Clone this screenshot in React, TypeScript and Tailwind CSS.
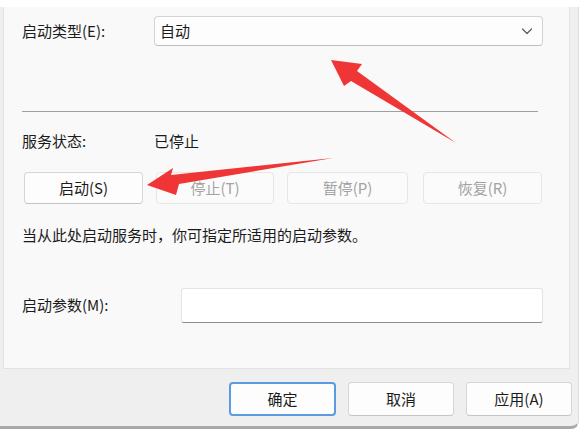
import React from "react";

const font = { fontFamily: '"Noto Sans CJK SC", "Noto Sans", sans-serif' };

function Btn({ label, disabled, w = "w-[119px]" }: { label: string; disabled?: boolean; w?: string }) {
  return (
    <div
      className={`${w} h-[32px] rounded-[4px] flex items-center justify-center text-[15px] border ${
        disabled
          ? "border-[#e6e6e6] bg-[#fbfbfb] text-[#a3a3a3]"
          : "border-[#d6d6d6] border-b-[#c4c4c4] bg-[#fdfdfd] text-[#1b1b1b]"
      }`}
    >
      {label}
    </div>
  );
}

export default function App() {
  return (
    <div className="relative w-[584px] h-[440px] bg-white overflow-hidden pt-[7px]" style={font}>
      <div className="w-[579px] h-[422px] bg-[#efefef] rounded-br-[8px] border-r border-[#dcdcdc] border-b-[3px] border-b-[#a9a9a9] flex flex-col">
        {/* panel */}
        <div className="ml-[3px] w-[567px] h-[362px] bg-[#f9f9f9] border-l border-r border-b border-[#e2e2e2] pl-[18px] flex flex-col text-[15px] text-[#1b1b1b]">
          <div className="mt-[9px] flex items-center h-[30px]">
            <div className="w-[132px]">启动类型(E):</div>
            <div className="w-[389px] h-[30px] rounded-[4px] border border-[#d4d4d4] border-b-[#bdbdbd] bg-[#fdfdfd] flex items-center justify-between pl-[5px] pr-[9px]">
              <span>自动</span>
              <svg width="12" height="12" viewBox="0 0 12 12" fill="none">
                <path d="M1.5 4L6 8.5L10.5 4" stroke="#5a5a5a" strokeWidth="1.2" strokeLinecap="round" strokeLinejoin="round" />
              </svg>
            </div>
          </div>
          <div className="mt-[65px] h-px w-[516px] bg-[#a0a0a0]" />
          <div className="mt-[19px] flex items-center h-[20px]">
            <div className="w-[132px]">服务状态:</div>
            <div>已停止</div>
          </div>
          <div className="mt-[21px] ml-[2px] flex gap-[13px]">
            <Btn label="启动(S)" />
            <Btn label="停止(T)" disabled w="w-[118px]" />
            <Btn label="暂停(P)" disabled w="w-[121px]" />
            <div className="ml-[2px]">
              <Btn label="恢复(R)" disabled />
            </div>
          </div>
          <div className="mt-[21px] h-[20px] flex items-center">当从此处启动服务时，你可指定所适用的启动参数。</div>
          <div className="mt-[43px] flex items-center h-[35px]">
            <div className="w-[159px]">启动参数(M):</div>
            <div className="w-[362px] h-[35px] bg-white border border-[#e4e4e4] border-b-[#8f8f8f] rounded-[3px]" />
          </div>
        </div>
        {/* footer */}
        <div className="mt-[13px] flex justify-end gap-[12px] pr-[6px] text-[15px] text-[#1b1b1b]">
          <div className="w-[107px] h-[34px] rounded-[4px] border-2 border-[#5c9ae2] bg-[#fdfdfd] flex items-center justify-center">确定</div>
          <div className="w-[106px] h-[34px] rounded-[4px] border border-[#d6d6d6] border-b-[#c4c4c4] bg-[#fdfdfd] flex items-center justify-center">取消</div>
          <div className="w-[106px] h-[34px] rounded-[4px] border border-[#d6d6d6] border-b-[#c4c4c4] bg-[#fdfdfd] flex items-center justify-center">应用(A)</div>
        </div>
      </div>
      {/* annotation arrows */}
      <svg className="absolute left-0 top-0 pointer-events-none" width="584" height="440" viewBox="0 0 584 440">
        <polygon points="331,60 362,64 357,71 456,143 351,81 344,86" fill="#ef3535" />
        <polygon points="147,185 173,168 171,175 333,158 179,184 176,195" fill="#ef3535" />
      </svg>
    </div>
  );
}
